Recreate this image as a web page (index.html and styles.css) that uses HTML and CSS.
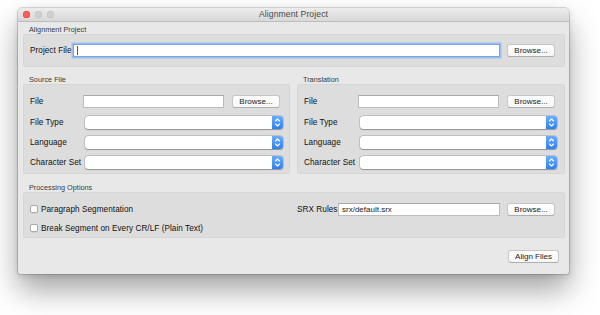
FILE: index.html
```html
<!DOCTYPE html>
<html>
<head>
<meta charset="utf-8">
<title>Alignment Project</title>
<link rel="stylesheet" href="styles.css">
</head>
<body>
<div class="window">
  <div class="titlebar">
    <div class="lights">
      <span class="light red"></span>
      <span class="light gray"></span>
      <span class="light gray"></span>
    </div>
    <div class="title">Alignment Project</div>
    <div></div>
  </div>
  <div class="content">
    <div class="section-title">Alignment Project</div>
    <div class="group group-project">
      <div class="row project-row">
        <span class="label lbl-project">Project File</span>
        <div class="input focused"><span class="caret"></span></div>
        <button class="btn browse">Browse...</button>
      </div>
    </div>

    <div class="columns">
      <div class="col">
        <div class="section-title tall">Source File</div>
        <div class="group group-files">
          <div class="row file-row r1">
            <span class="label lbl-file-src">File</span>
            <div class="input"></div>
            <button class="btn browse">Browse...</button>
          </div>
          <div class="row select-row">
            <span class="label lbl-sel-src">File Type</span>
            <div class="select"><span class="stepper"><svg width="11" height="13" viewBox="0 0 11 13"><path d="M3.5 5 L5.5 3 L7.5 5 M3.5 8 L5.5 10 L7.5 8" fill="none" stroke="#fff" stroke-width="1.1" stroke-linecap="round" stroke-linejoin="round"/></svg></span></div>
          </div>
          <div class="row select-row">
            <span class="label lbl-sel-src">Language</span>
            <div class="select"><span class="stepper"><svg width="11" height="13" viewBox="0 0 11 13"><path d="M3.5 5 L5.5 3 L7.5 5 M3.5 8 L5.5 10 L7.5 8" fill="none" stroke="#fff" stroke-width="1.1" stroke-linecap="round" stroke-linejoin="round"/></svg></span></div>
          </div>
          <div class="row select-row">
            <span class="label lbl-sel-src">Character Set</span>
            <div class="select"><span class="stepper"><svg width="11" height="13" viewBox="0 0 11 13"><path d="M3.5 5 L5.5 3 L7.5 5 M3.5 8 L5.5 10 L7.5 8" fill="none" stroke="#fff" stroke-width="1.1" stroke-linecap="round" stroke-linejoin="round"/></svg></span></div>
          </div>
        </div>
      </div>
      <div class="col">
        <div class="section-title tall">Translation</div>
        <div class="group group-files">
          <div class="row file-row r1">
            <span class="label lbl-file-tr">File</span>
            <div class="input"></div>
            <button class="btn browse">Browse...</button>
          </div>
          <div class="row select-row tr">
            <span class="label lbl-sel-tr">File Type</span>
            <div class="select"><span class="stepper"><svg width="11" height="13" viewBox="0 0 11 13"><path d="M3.5 5 L5.5 3 L7.5 5 M3.5 8 L5.5 10 L7.5 8" fill="none" stroke="#fff" stroke-width="1.1" stroke-linecap="round" stroke-linejoin="round"/></svg></span></div>
          </div>
          <div class="row select-row tr">
            <span class="label lbl-sel-tr">Language</span>
            <div class="select"><span class="stepper"><svg width="11" height="13" viewBox="0 0 11 13"><path d="M3.5 5 L5.5 3 L7.5 5 M3.5 8 L5.5 10 L7.5 8" fill="none" stroke="#fff" stroke-width="1.1" stroke-linecap="round" stroke-linejoin="round"/></svg></span></div>
          </div>
          <div class="row select-row tr">
            <span class="label lbl-sel-tr">Character Set</span>
            <div class="select"><span class="stepper"><svg width="11" height="13" viewBox="0 0 11 13"><path d="M3.5 5 L5.5 3 L7.5 5 M3.5 8 L5.5 10 L7.5 8" fill="none" stroke="#fff" stroke-width="1.1" stroke-linecap="round" stroke-linejoin="round"/></svg></span></div>
          </div>
        </div>
      </div>
    </div>

    <div class="section-title taller">Processing Options</div>
    <div class="group group-proc">
      <div class="proc-row1">
        <label class="check"><span class="box"></span><span class="label">Paragraph Segmentation</span></label>
        <div class="row srx-row">
          <span class="label lbl-srx">SRX Rules</span>
          <div class="input"><span class="value">srx/default.srx</span></div>
          <button class="btn browse">Browse...</button>
        </div>
      </div>
      <div class="proc-row2">
        <label class="check"><span class="box"></span><span class="label">Break Segment on Every CR/LF (Plain Text)</span></label>
      </div>
    </div>

    <div class="footer">
      <button class="btn align">Align Files</button>
    </div>
  </div>
</div>
</body>
</html>
```
FILE: styles.css
```css
* { box-sizing: border-box; }
html, body { margin: 0; padding: 0; background: #ffffff; }
body {
  font-family: "Liberation Sans", Arial, sans-serif;
  font-size: 8px;
  color: #1c1c1c;
  width: 600px;
  height: 315px;
  overflow: hidden;
}
.window {
  margin: 8px 0 0 18px;
  width: 551px;
  height: 266px;
  background: #e8e8e8;
  border-radius: 4px 4px 2px 2px;
  box-shadow: 0 16px 30px rgba(0,0,0,0.36), 0 2px 6px rgba(0,0,0,0.12), 0 0 0 0.6px rgba(0,0,0,0.25);
  overflow: hidden;
}
.titlebar {
  height: 14px;
  display: grid;
  grid-template-columns: 1fr auto 1fr;
  align-items: center;
  background: linear-gradient(#ececec, #d8d8d8);
  border-bottom: 1px solid #bdbdbd;
}
.lights { display: flex; gap: 5px; padding-left: 5px; }
.light {
  width: 7px; height: 7px; border-radius: 50%;
  display: block;
}
.light.red { background: #fb5f57; box-shadow: inset 0 0 0 0.5px #e0443e; }
.light.gray { background: #d0d0d0; box-shadow: inset 0 0 0 0.5px #bdbdbd; }
.title {
  font-size: 8.6px;
  color: #4a4a4a;
  letter-spacing: 0.1px;
  line-height: 13px;
}
.content { padding: 0 4px 0 5px; }
.section-title {
  height: 12px;
  display: flex;
  align-items: flex-end;
  padding-left: 6px;
  font-size: 7.3px;
  line-height: 8px;
  color: #3a3a3a;
}
.section-title.tall { height: 17px; }
.section-title.taller { height: 18px; }
.group {
  background: #dddddd;
  border-radius: 3px;
  box-shadow: inset 0 0 0 0.5px rgba(0,0,0,0.06);
}
.row { display: flex; align-items: center; }
.label { font-size: 8.2px; color: #111; white-space: nowrap; letter-spacing: 0.05px; }
.input {
  height: 13px;
  background: #fff;
  border: 1px solid #bcbcbc;
  border-top-color: #a9a9a9;
  flex: 1;
  display: flex;
  align-items: center;
  padding-left: 3px;
}
.input.focused {
  border-color: #79a4dd;
  box-shadow: 0 0 0 1.5px #9cc0f0;
}
.caret { width: 1px; height: 9px; background: #555; display: block; }
.value { font-size: 8px; color: #222; }
.btn {
  font-family: inherit;
  font-size: 8px;
  color: #222;
  height: 13px;
  padding: 0;
  background: linear-gradient(#ffffff, #f6f6f6);
  border: 1px solid #c6c6c6;
  border-bottom-color: #adadad;
  border-radius: 3px;
  line-height: 11px;
}
.browse { width: 48px; }
.group-project { height: 33px; display: flex; align-items: center; }
.project-row { width: 100%; padding: 0 10px 0 7px; gap: 7px; }
.lbl-project { width: 36px; }
.columns { display: grid; grid-template-columns: 267px 268px; column-gap: 7px; }
.group-files { height: 90px; padding: 7px 0 2px; }
.file-row { height: 21px; padding: 0 10px 0 7px; gap: 8px; }
.lbl-file-src { width: 45px; }
.lbl-file-tr { width: 46px; }
.select-row { height: 20px; padding: 0 7px 0 7px; }
.select-row.tr { padding-right: 8px; }
.lbl-sel-src { width: 55px; }
.lbl-sel-tr { width: 56px; }
.select {
  flex: 1;
  height: 13px;
  background: #fff;
  border-radius: 3px;
  box-shadow: 0 0 0 0.5px rgba(0,0,0,0.22), 0 0.5px 1px rgba(0,0,0,0.25);
  display: flex;
  justify-content: flex-end;
  overflow: hidden;
}
.stepper {
  width: 11px;
  height: 13px;
  background: linear-gradient(#6cacfd, #2f7ff7);
  display: block;
}
.stepper svg { display: block; }
.group-proc { height: 46px; padding: 7px 0 1px; }
.proc-row1 { display: grid; grid-template-columns: 274px 1fr; height: 20px; align-items: center; }
.proc-row2 { height: 18px; display: flex; align-items: center; }
.check { display: flex; align-items: center; gap: 3px; padding-left: 7px; }
.box {
  width: 8px; height: 8px;
  background: #fff;
  border: 0.5px solid #a8a8a8;
  border-radius: 2px;
  display: block;
  box-shadow: 0 0.5px 0.5px rgba(0,0,0,0.12);
}
.srx-row { padding-right: 10px; gap: 7px; }
.lbl-srx { width: 34px; }
.footer { display: flex; justify-content: flex-end; padding: 12px 6px 0 0; }
.align { width: 51px; }
```
